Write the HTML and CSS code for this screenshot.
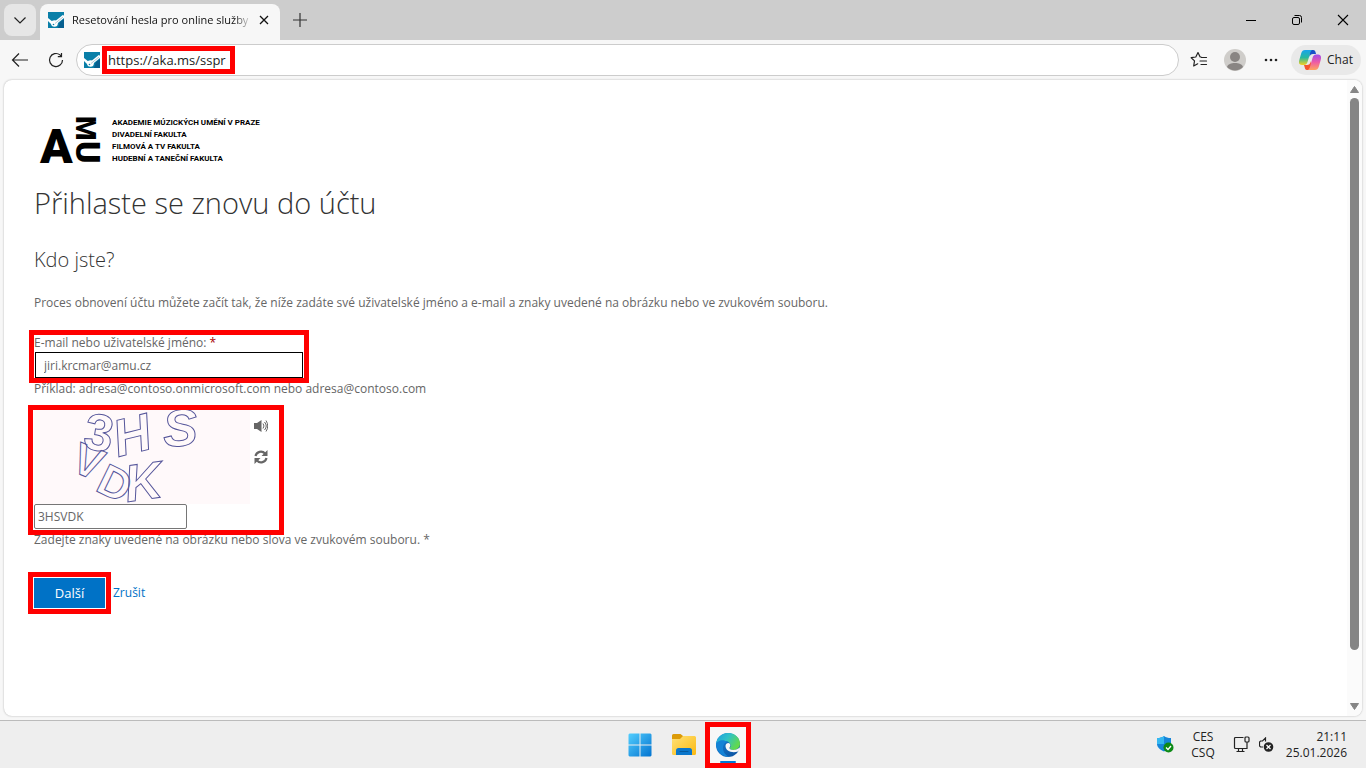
FILE: index.html
```html
<!DOCTYPE html>
<html lang="cs">
<head>
  <meta charset="UTF-8" />
  <title>Resetování hesla pro online služby</title>
  <meta name="viewport" content="width=device-width, initial-scale=1" />
  <link rel="stylesheet" href="styles.css">
</head>
<body>

  <!-- Shared favicon -->
  <svg width="0" height="0" class="defs" aria-hidden="true">
    <symbol id="favicon" viewBox="0 0 16 16">
      <rect width="16" height="16" fill="#0a7fa8" />
      <path d="M10 16l2-6 4-3v9z" fill="#075f8f" />
      <path d="M0 6l5 4-1 3-4-4z" fill="#fff" />
      <circle cx="6.500" cy="11.500" r="3.300" fill="#fff" />
      <path d="M8 10.500L16 4" stroke="#fff" stroke-width="3" />
      <path d="M7 11.500L15 5" stroke="#9db9c8" stroke-width=".8" />
      <circle cx="5.500" cy="12.500" r=".8" fill="#0a7fa8" />
    </symbol>
  </svg>

  <!-- Tabs -->
  <header class="tabbar">
    <button class="tab-list" aria-label="Seznam karet">
      <svg width="14" height="14" viewBox="0 0 14 14"><path d="M1.500 4.500l5.500 5.500 5.500-5.500" fill="none" stroke="#222" stroke-width="1.200" /></svg>
    </button>
    <div class="tab">
      <svg class="favicon"><use href="#favicon" /></svg>
      <span class="tab-title">Resetování hesla pro online služby</span>
      <button class="tab-close" aria-label="Zavřít kartu">
        <svg width="10" height="10" viewBox="0 0 10 10"><path d="M1 1l8 8M9 1L1 9" stroke="#111" stroke-width="1.300" /></svg>
      </button>
    </div>
    <button class="new-tab" aria-label="Nová karta">
      <svg width="16" height="16" viewBox="0 0 16 16"><path d="M8 1v14M1 8h14" stroke="#333" stroke-width="1.200" /></svg>
    </button>
    <div class="window-buttons">
      <button aria-label="Minimalizovat"><svg width="12" height="12" viewBox="0 0 12 12"><path d="M1 6.500h10" stroke="#000" /></svg></button>
      <button aria-label="Obnovit"><svg width="12" height="12" viewBox="0 0 12 12" fill="none" stroke="#000"><rect x="1.500" y="3.500" width="7" height="7" rx="1.500" /><path d="M3.500 1.500h5a2 2 0 0 1 2 2v5" /></svg></button>
      <button aria-label="Zavřít"><svg width="12" height="12" viewBox="0 0 12 12"><path d="M1 1l10 10M11 1L1 11" stroke="#000" stroke-width="1.100" /></svg></button>
    </div>
  </header>

  <!-- Toolbar -->
  <nav class="toolbar">
    <button class="nav-btn" aria-label="Zpět">
      <svg width="18" height="16" viewBox="0 0 18 16" fill="none" stroke="#222" stroke-width="1.200"><path d="M17 8H1.500M8 1.500L1.500 8 8 14.500" /></svg>
    </button>
    <button class="nav-btn" aria-label="Obnovit stránku">
      <svg width="16" height="16" viewBox="0 0 16 16" fill="none" stroke="#222" stroke-width="1.200"><path d="M14.500 8A6.500 6.500 0 1 1 12 2.900L13.500 4.500M13.500 1v3.700H9.800" /></svg>
    </button>
    <div class="address">
      <svg class="favicon"><use href="#favicon" /></svg>
      <label class="url mark">
        <input type="text" value="https://aka.ms/sspr" aria-label="Adresa" />
      </label>
    </div>
    <button class="tool-btn" aria-label="Oblíbené">
      <svg width="18" height="18" viewBox="0 0 18 18" fill="none" stroke="#222" stroke-width="1.200" stroke-linejoin="round" stroke-linecap="round"><path d="M11 6l-1-.2L8 1.500 5.800 6l-4.600.7 3.300 3.200L3.700 15l4-2.200M11.500 6.500h5M10 10h6.500M11 13.500h5.500" /></svg>
    </button>
    <button class="tool-btn" aria-label="Profil">
      <svg width="22" height="22" viewBox="0 0 22 22"><circle cx="11" cy="11" r="11" fill="#cfcdca" /><circle cx="11" cy="8" r="5" fill="#898583" /><path d="M3 18c1-3 4-4 8-4s7 1 8 4a11 11 0 0 1-16 0z" fill="#898583" /></svg>
    </button>
    <button class="tool-btn" aria-label="Další možnosti">
      <svg width="14" height="4" viewBox="0 0 14 4" fill="#222"><circle cx="2" cy="2" r="1.300" /><circle cx="7" cy="2" r="1.300" /><circle cx="12" cy="2" r="1.300" /></svg>
    </button>
    <button class="chat">
      <svg width="22" height="20" viewBox="0 0 22 20">
        <defs>
          <linearGradient id="cpLeft" x1="0" y1="0" x2="0" y2="1"><stop offset="0" stop-color="#18a4ec" /><stop offset=".5" stop-color="#27b8a0" /><stop offset="1" stop-color="#f6d01e" /></linearGradient>
          <linearGradient id="cpRight" x1="0" y1="0" x2="0" y2="1"><stop offset="0" stop-color="#a04bea" /><stop offset=".5" stop-color="#ee5ba5" /><stop offset="1" stop-color="#ffa45e" /></linearGradient>
        </defs>
        <path d="M10 0h4c2 0 2.500 1.500 3 4h-3c-2 0-3 1-3.500 3z" fill="#1950c8" />
        <path d="M12 20H8c-2 0-2-2-3-5h3c2 0 3-1 4-4z" fill="#f4532d" />
        <path d="M6 0h7c-1.500 1-2 3-3 7l-1.500 5c-.6 2-1.500 3-3.500 3H3c-3 0-3.500-2-2.700-5l2-7C3 1 4 0 6 0z" fill="url(#cpLeft)" />
        <path d="M16 20H9c1.500-1 2-3 3-7l1.500-5c.6-2 1.500-3.500 3.500-3.500h2c3 0 3.500 2.500 2.700 5.500l-2 7c-.7 2-1.700 3-3.700 3z" fill="url(#cpRight)" />
      </svg>
      Chat
    </button>
  </nav>

  <!-- Page -->
  <div class="viewport">
    <main>
      <svg class="logo" width="240" height="50" viewBox="0 0 240 50" role="img" aria-label="AMU">
        <text class="logo-a" x="-1" y="48">A</text>
        <text class="logo-m" transform="translate(35 1) rotate(90)">M</text>
        <text class="logo-u" transform="translate(35 26) rotate(90)">U</text>
        <g class="logo-text">
          <text x="71" y="10">AKADEMIE MÚZICKÝCH UMĚNÍ V PRAZE</text>
          <text x="71" y="22">DIVADELNÍ FAKULTA</text>
          <text x="71" y="34">FILMOVÁ A TV FAKULTA</text>
          <text x="71" y="46">HUDEBNÍ A TANEČNÍ FAKULTA</text>
        </g>
      </svg>

      <h1>Přihlaste se znovu do účtu</h1>
      <h2>Kdo jste?</h2>
      <p class="intro">Proces obnovení účtu můžete začít tak, že níže zadáte své uživatelské jméno a e-mail a znaky uvedené na obrázku nebo ve zvukovém souboru.</p>

      <form onsubmit="return false">
        <div class="user-field mark">
          <label for="user">E-mail nebo uživatelské jméno: <span class="required">*</span></label>
          <input type="text" id="user" value="jiri.krcmar@amu.cz" />
        </div>
        <p class="hint">Příklad: adresa@contoso.onmicrosoft.com nebo adresa@contoso.com</p>

        <div class="captcha mark mark-wide">
          <div class="captcha-row">
            <svg class="captcha-image" width="216" height="94" viewBox="0 0 216 94">
              <rect width="216" height="94" fill="#fff9fa" />
              <g class="captcha-text">
                <text transform="translate(48 38) rotate(9)">3</text>
                <text class="slant" transform="translate(84 47) rotate(-14)">H</text>
                <text class="slant" transform="translate(130 37) rotate(-4)">S</text>
                <text class="small" transform="translate(35 60) rotate(22)">V</text>
                <text class="small" transform="translate(60 80) rotate(26)">D</text>
                <text class="slant" transform="translate(93 92) rotate(-8)">K</text>
              </g>
            </svg>
            <div class="captcha-tools">
              <button type="button" aria-label="Přehrát zvuk">
                <svg width="14" height="14" viewBox="0 0 14 14"><path d="M0 4h3l4.500-3v12L3 10H0z" fill="#666" /><path d="M9 4.500q2 2.500 0 5M10.500 3q3.500 4 0 8M12 1.500q3.500 5.500 0 11" fill="none" stroke="#666" /></svg>
              </button>
              <button type="button" aria-label="Nový obrázek">
                <svg width="14" height="14" viewBox="0 0 14 14"><path d="M1.500 6A5.500 5.500 0 0 1 11 3.500M12.500 8A5.500 5.500 0 0 1 3 10.500" fill="none" stroke="#666" stroke-width="2.200" /><path d="M13.500 0v6h-6zM.5 14V8h6z" fill="#666" /></svg>
              </button>
            </div>
          </div>
          <input type="text" id="captcha" value="3HSVDK" />
        </div>
        <label class="hint" for="captcha">Zadejte znaky uvedené na obrázku nebo slova ve zvukovém souboru. *</label>

        <div class="actions">
          <div class="mark mark-wide"><button class="next">Další</button></div>
          <a href="#">Zrušit</a>
        </div>
      </form>
    </main>
    <div class="scrollbar">
      <svg width="9" height="7" viewBox="0 0 9 7"><path d="M4.500.5L8.500 6.500H.5z" fill="#858585" stroke="#858585" stroke-linejoin="round" /></svg>
      <div class="track"><div class="thumb"></div></div>
      <svg width="9" height="7" viewBox="0 0 9 7"><path d="M4.500 6.500L.5.500h8z" fill="#858585" stroke="#858585" stroke-linejoin="round" /></svg>
    </div>
  </div>

  <!-- Taskbar -->
  <footer class="taskbar">
    <div class="apps">
      <button aria-label="Start">
        <svg width="24" height="24" viewBox="0 0 24 24">
          <defs><linearGradient id="win" gradientUnits="userSpaceOnUse" x1="0" y1="0" x2="24" y2="24"><stop offset="0" stop-color="#55d0ff" /><stop offset="1" stop-color="#0071cf" /></linearGradient></defs>
          <path d="M1.500.5h10v11h-11v-10zM12.500.5h10l1 1v10h-11zM.5 12.500h11v11h-10l-1-1zM12.500 12.500h11v10l-1 1h-10z" fill="url(#win)" />
        </svg>
      </button>
      <button aria-label="Průzkumník souborů">
        <svg width="24" height="22" viewBox="0 0 24 22">
          <defs><linearGradient id="fold" x1="0" y1="0" x2="1" y2="1"><stop offset="0" stop-color="#ffe177" /><stop offset="1" stop-color="#fbb911" /></linearGradient></defs>
          <path d="M0 1.500A1.500 1.500 0 0 1 1.500 0h7L11 2v4H0z" fill="#dc9b08" />
          <path d="M0 5h8l3-3h11.500A1.500 1.500 0 0 1 24 3.500v16a1.500 1.500 0 0 1-1.500 1.500h-21A1.500 1.500 0 0 1 0 19.500z" fill="url(#fold)" />
          <path d="M4 21v-4.500A2.500 2.500 0 0 1 6.500 14h11a2.500 2.500 0 0 1 2.500 2.500V21z" fill="#0a76cb" />
          <path d="M8 17.500h8" stroke="#055a9e" stroke-linecap="round" />
        </svg>
      </button>
      <button class="edge mark" aria-label="Microsoft Edge">
        <svg width="24" height="24" viewBox="0 0 24 24">
          <defs>
            <linearGradient id="edgeTop" x1="0" y1="0" x2="1" y2=".5"><stop offset="0" stop-color="#1b9de2" /><stop offset=".5" stop-color="#2fc2c7" /><stop offset="1" stop-color="#62d94c" /></linearGradient>
            <linearGradient id="edgeLow" x1="0" y1="0" x2="1" y2="1"><stop offset="0" stop-color="#1683d8" /><stop offset="1" stop-color="#0c4f9c" /></linearGradient>
          </defs>
          <circle cx="12" cy="12" r="12" fill="url(#edgeLow)" />
          <path d="M0 11C1 4 6 0 12 0c7 0 12 5 12 10.500 0 4-3 6.500-6.500 6.500-3 0-4-1.300-3.500-2.300 2-3-1-6.700-5-6.700C5 8 1 9 0 11z" fill="url(#edgeTop)" />
          <path d="M9 10c-4 4-2 12 5 14C6 24 1 19 0 12c1-5 8-6 11-3z" fill="#1583d6" />
          <path d="M9.500 13c0-2.500 3-4 4.300-2.300 1 1.300.3 2.800-.3 4-.3 1.200 1 2.300 4 2.300 2.500 0 4.500-1 6-2.500l.5 1.500c-1 1.500-1.500 2-2 2.500-6 2-12.500-.5-12.500-5.500z" fill="#f7f7f7" />
        </svg>
      </button>
    </div>
    <div class="tray">
      <svg width="17" height="17" viewBox="0 0 17 17"><path d="M7 0c2 1.500 4 2 7 2v6c0 3-3 6-7 7.500C3 14 0 11 0 8V2c3 0 5-.5 7-2z" fill="#1686d9" /><path d="M7 0v8H0V2c3 0 5-.5 7-2z" fill="#35b8f1" /><circle cx="11.500" cy="11.500" r="5" fill="#0d8a16" /><path d="M9 11.500l2 2 3-3.500" fill="none" stroke="#fff" stroke-width="1.300" /></svg>
      <div class="lang">CES<br>CSQ</div>
      <svg class="network" width="17" height="17" viewBox="0 0 17 17" fill="none" stroke="#222" stroke-width="1.200"><path d="M10.500 1.500h-8a1 1 0 0 0-1 1v9a1 1 0 0 0 1 1h12M5.500 12.500v3M9.500 12.500v3M3.500 15.500h8M14 6v7" /><rect x="12" y="1" width="4" height="5" rx="1" /></svg>
      <svg class="volume" width="15" height="15" viewBox="0 0 15 15"><path d="M6.500 4.500V1L3.500 4h-2l-1 1v4l1 1H4" fill="none" stroke="#222" stroke-width="1.200" /><circle cx="9.500" cy="10" r="4.800" fill="#222" /><path d="M7.500 8l4 4M11.500 8l-4 4" stroke="#fff" stroke-width="1.200" /></svg>
      <div class="clock">21:11<br>25.01.2026</div>
    </div>
  </footer>

</body>
</html>
```
FILE: styles.css
```css
* {
  box-sizing: border-box;
}
body {
  margin: 0;
  min-height: 100vh;
  display: flex;
  flex-direction: column;
  background: #f7f7f7;
  color: #666;
  font-family: "Open Sans", "Noto Sans", sans-serif;
  font-size: 12px;
  line-height: 16px;
}
button, input {
  font: inherit;
  color: inherit;
}
button {
  display: flex;
  align-items: center;
  justify-content: center;
  padding: 0;
  border: none;
  background: none;
}
svg {
  display: block;
  flex: none;
}
.defs {
  position: absolute;
}
.favicon {
  width: 16px;
  height: 16px;
}

/* Red highlight around a step */
.mark {
  position: relative;
}
.mark::after {
  content: "";
  position: absolute;
  inset: -5px;
  border: 5px solid #f00;
  pointer-events: none;
}
.mark-wide::after {
  inset: -5px -6px;
}

/* Tabs */
.tabbar {
  display: flex;
  height: 40px;
  padding-left: 4px;
  background: #cdcdcd;
  color: #111;
}
.tab-list {
  width: 32px;
  height: 32px;
  margin: 4px 4px 0 0;
  border-radius: 8px;
  background: #e6e6e6;
}
.tab {
  display: flex;
  align-items: center;
  gap: 8px;
  width: 240px;
  height: 36px;
  margin-top: 4px;
  padding: 0 8px 4px;
  border-radius: 8px 8px 0 0;
  background: #f7f7f7;
}
.tab-title {
  flex: 1;
  white-space: nowrap;
  font-size: 11px;
  -webkit-mask-image: linear-gradient(to right, #000 90%, transparent);
  mask-image: linear-gradient(to right, #000 90%, transparent);
}
.tab-close {
  width: 16px;
  height: 16px;
  margin-left: -4px;
}
.new-tab {
  width: 40px;
}
.window-buttons {
  display: flex;
  margin-left: auto;
}
.window-buttons button {
  width: 46px;
}

/* Toolbar */
.toolbar {
  display: flex;
  align-items: center;
  height: 40px;
  padding: 0 5px 0 2px;
  color: #222;
}
.nav-btn, .tool-btn {
  width: 36px;
  height: 32px;
}
.address {
  flex: 1;
  display: flex;
  align-items: center;
  gap: 7px;
  height: 32px;
  margin: 0 2px;
  padding: 0 8px 0 7px;
  border: 1px solid #ccc;
  border-radius: 16px;
  background: #fff;
}
.url input {
  display: block;
  width: 123px;
  height: 18px;
  padding: 0 1px;
  border: none;
  outline: none;
  background: none;
  font-size: 13px;
}
.chat {
  gap: 6px;
  width: 70px;
  height: 30px;
  margin-left: 2px;
  border-radius: 15px;
  background: #e9e9e9;
}

/* Page */
.viewport {
  flex: 1;
  display: flex;
  margin: 0 4px 4px;
  border-radius: 8px;
  background: #fff;
  box-shadow: 0 0 2px #aaa;
}
main {
  flex: 1;
  padding: 35px 30px;
}
.logo {
  margin-left: 7px;
  overflow: visible;
}
.logo text {
  fill: #000;
  font-family: Roboto, "Liberation Sans", sans-serif;
  font-weight: 900;
}
.logo .logo-a {
  font-size: 48px;
}
.logo .logo-m {
  font-size: 28px;
}
.logo .logo-u {
  font-size: 34px;
}
.logo .logo-text text {
  font-size: 8px;
  font-weight: 700;
}
h1 {
  margin: 16px 0 0;
  color: #333;
  font-size: 29px;
  font-weight: 300;
  line-height: 44px;
}
h2 {
  margin: 19px 0 0;
  color: #333;
  font-size: 20px;
  font-weight: 300;
  line-height: 32px;
}
p {
  margin: 0;
}
.intro {
  margin: 19px 0 24px;
}
.user-field {
  width: 270px;
}
.user-field label {
  display: block;
}
.required {
  color: #a80000;
}
.user-field input {
  display: block;
  width: 268px;
  height: 26px;
  margin: 1px 0 3px 1px;
  padding: 0 8px;
  border: 1px solid #000;
}
.hint {
  display: block;
}
.captcha {
  width: 244px;
  margin: 13px 0 2px;
  padding-bottom: 1px;
}
.captcha-row {
  display: flex;
  gap: 4px;
}
.captcha-image {
  overflow: visible;
}
.captcha-text {
  fill: none;
  stroke: #55559a;
  stroke-width: 1px;
  font-family: "Liberation Sans", sans-serif;
  font-size: 52px;
  font-weight: 700;
}
.captcha-text .small {
  font-size: 44px;
}
.slant {
  font-style: italic;
}
.captcha-tools {
  display: flex;
  flex-direction: column;
  gap: 17px;
  padding-top: 9px;
}
.captcha input {
  display: block;
  width: 153px;
  height: 25px;
  padding: 0 3px;
  border: 1px solid #767676;
  border-radius: 2px;
}
.actions {
  display: flex;
  align-items: center;
  gap: 8px;
  margin-top: 29px;
}
.next {
  width: 71px;
  height: 32px;
  border: solid #fff;
  border-width: 1px 0;
  background: #0072c6;
  color: #fff;
  font-size: 13px;
}
.actions a {
  color: #0072c6;
  text-decoration: none;
}

/* Scrollbar */
.scrollbar {
  display: flex;
  flex-direction: column;
  align-items: center;
  width: 15px;
  padding: 6px 0;
  border-radius: 0 8px 8px 0;
  background: #fbfbfb;
}
.track {
  flex: 1;
  width: 9px;
  padding: 5px 0;
}
.thumb {
  height: 92%;
  border-radius: 5px;
  background: #858585;
}

/* Taskbar */
.taskbar {
  display: grid;
  grid-template-columns: 1fr auto 1fr;
  height: 48px;
  border-top: 1px solid #bbb;
  background: #eee;
  color: #222;
}
.apps {
  grid-column: 2;
  display: flex;
  align-items: center;
  gap: 8px;
  padding-left: 1px;
}
.apps button {
  width: 36px;
  height: 36px;
}
.edge {
  background: #f7f7f7;
}
.edge::before {
  content: "";
  position: absolute;
  bottom: 0;
  left: 10px;
  width: 16px;
  height: 2px;
  border-radius: 2px;
  background: #0078d4;
}
.tray {
  display: flex;
  align-items: center;
  justify-content: flex-end;
  padding-right: 19px;
}
.lang {
  margin: 0 18px 0 17px;
  text-align: center;
}
.volume {
  margin: 0 12px 0 9px;
}
.clock {
  text-align: right;
}
```
